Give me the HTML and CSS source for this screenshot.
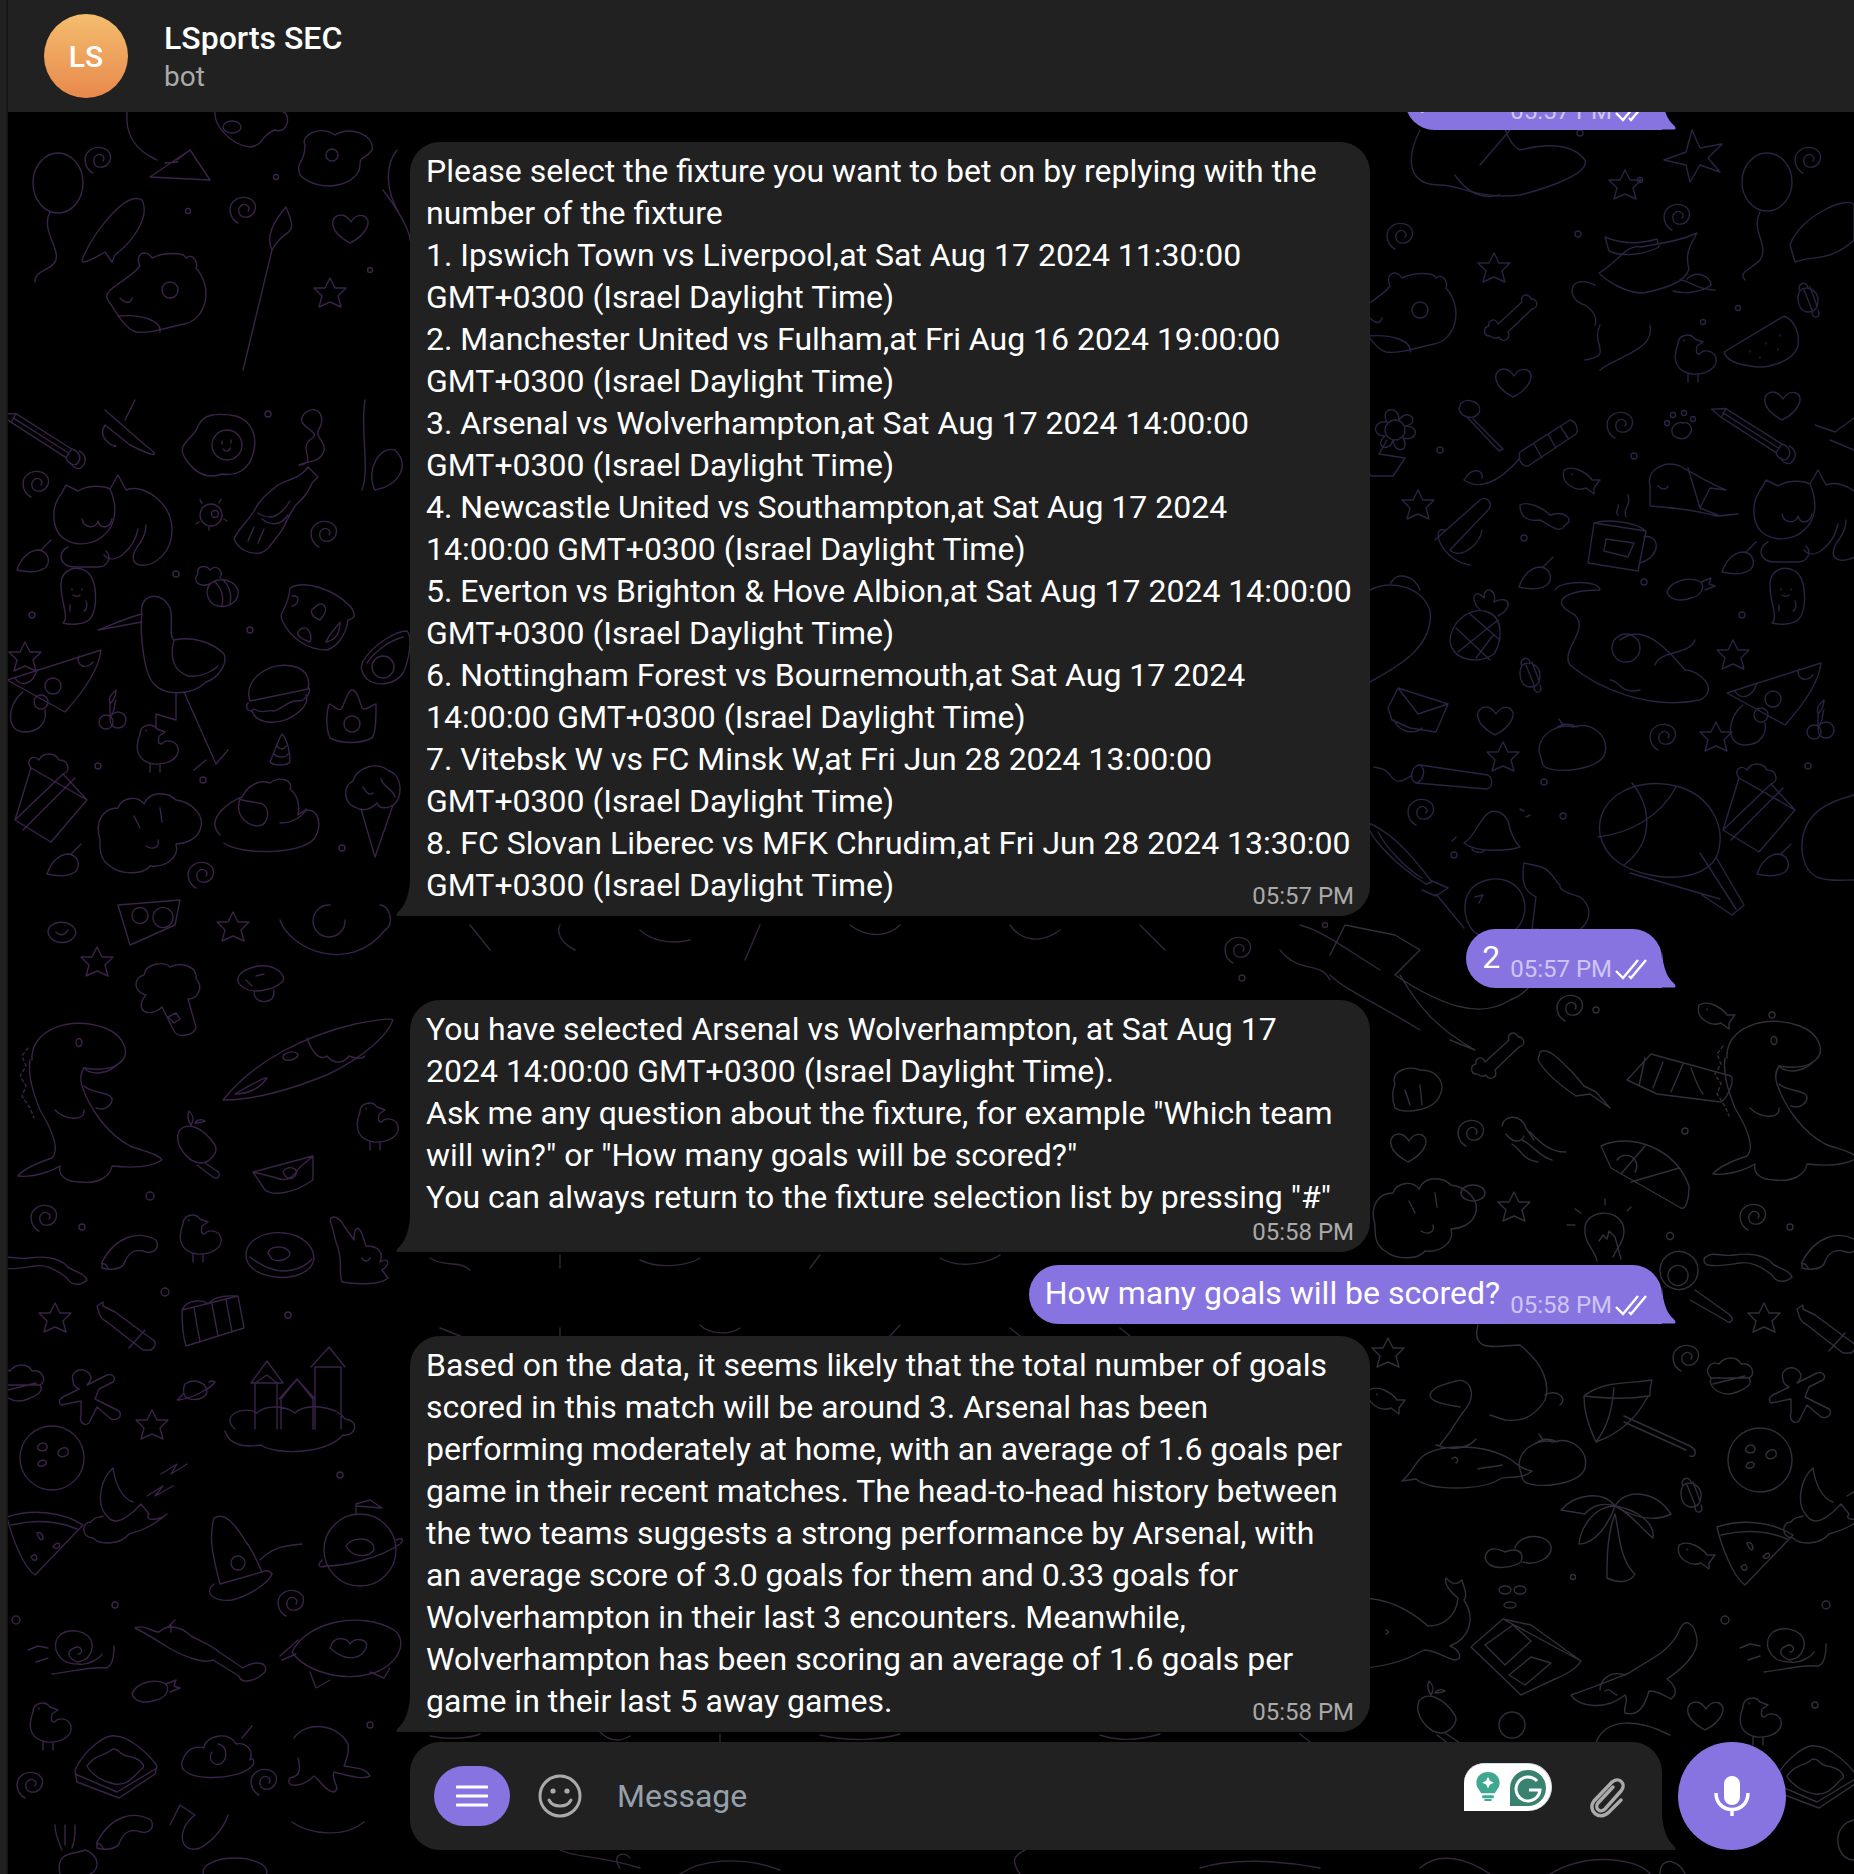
FILE: index.html
```html
<!DOCTYPE html>
<html lang="en">
<head>
  <meta charset="UTF-8">
  <title>LSports SEC</title>
  <link rel="stylesheet" href="styles.css">
</head>
<body>
  <div class="app">
    <div class="edge"></div>
    <main class="chat">
      <svg class="wallpaper" viewBox="8 0 1846 1874" aria-hidden="true">
        <defs>
          <path id="star" d="M0-15L5-5 16-5 8 3 11 14 0 9-11 14-8 3-16-5-5-5Z"/>
          <path id="heart" d="M0 15C-24 2-19-13-9-13-4-13-1-9 1-6 4-11 9-14 14-12 22-8 18 6 0 15Z"/>
          <path id="spiral" d="M3 1C6-3 1-7-3-5-8-2-7 6-1 7 7 8 12 1 10-6 7-13-4-15-11-9-18-3-15 9-7 13"/>
          <g id="leaf"><path d="M-18 12C-14 0-6-8 4-8 14-6 16 4 10 10 2 15-10 14-18 12Z"/><path d="M6-8L16-18"/></g>
          <g id="bone"><path d="M-20 14C-27 14-27 5-21 4-23-2-14-5-12 2L12-20C9-27 19-30 21-23 28-24 29-14 22-13L-2 10C2 17-8 22-11 15-13 17-17 16-20 14Z"/></g>
          <g id="candy"><path d="M-8-11C0-14 8-8 8 0 8 8 4 12-2 12-8 12-12 6-12-1-12-6-11-9-8-11ZM-10-9C-14-16-4-20-2-13M2 12C2 20 12 18 8 10M-6-10L2 10M0-13L7 6"/></g>
          <g id="duck"><path d="M-12-18C-12-27 0-30 5-23L13-20 7-16C6-10 6-8 10-8 13-13 24-12 26-4 28 6 16 13 2 12-12 10-19 0-12-18ZM-2 12V20M8 12V20M-6-22V-21"/></g>
          <g id="pencil"><path d="M-48-3L-35-9 30 3 28 13-36 1ZM-35-9L-36 1M-36-4L29 8M30 3C38 2 44 8 40 16 36 18 30 17 28 13M38 2C46 3 50 10 45 18 41 20 36 19 34 16" transform="rotate(22)"/></g>
          <g id="cat"><path d="M-55 0C-60-22-48-30-44-40L-32-34C-22-40-8-40 0-36L8-50 16-35C34-42 62-22 62 5 62 28 44 42 30 40 20 38 22 28 30 18 34 12 36 6 36 0M-55 0C-50 22-20 24-6 10 6 0 8-18 0-36"/><path d="M-42 22C-54 28-50 42-35 42H-12C-2 42 2 32-4 26M-28-6C-26 4-14 4-12-4-10 4 0 4 2-6M-6 30C4 42 24 24 28 4"/></g>
          <g id="egg"><path d="M-35 8C-45-6-25-12-22-24-16-38 0-36 10-35 26-34 38-20 34 0 30 22 14 26 2 24-14 30-26 22-35 8Z"/><circle cx="7" cy="-5" r="15"/><path d="M2-9V-6M11-10V-7M3-1C6 2 9 2 10-2"/></g>
          <g id="bottle"><path d="M30-48L40-38 34-32C30-22 26-18 18-10 10 0 8 10 2 18-6 28-10 36-18 38-28 40-40 34-44 24-40 14-30 6-24-4-18-16-10-22 0-30 10-36 22-36 30-48ZM-16 4C-8 10 2 12 10 0M-20-2C-8 6 2 2 12-14M-30 26L-24 12M-20 28L-14 14"/></g>
          <g id="steam"><path d="M-6 30C14 28-8 14 6 4 20-4-14-8 0-22 12-32 22-18 14-6 8 2 24 8 18 18 14 28 2 26-6 30Z"/></g>
          <g id="virus"><circle r="11"/><circle cx="4" cy="-1" r="3.5"/><path d="M-9-12L-11-15M8-12L10-16M13 4L16 6M-12 7L-15 9M-2 12V15"/></g>
          <g id="ghost"><path d="M-15 28C-8 22-18 6-17-12-16-26-2-30 8-24 20-16 20 14 12 24 6 30-8 30-15 28ZM-6-6V-5M4-6V-5M-5 0C-2 2 0 2 2 0M-8 10V16M8 6C10 10 8 16 6 16"/></g>
          <g id="bee"><path d="M-8-4C2-12 16-8 20 2 22 14 10 20 0 18-10 16-14 4-8-4ZM-4-7C4 0 6 8 4 18M4-9C12-2 14 6 12 16"/><path d="M-8-4C-20 0-26-8-20-14-22-22-12-24-8-18-2-24 6-18 2-10"/></g>
          <g id="pillow"><path d="M-28-30C-14-38 14-30 32-12 38-4 38 0 30 2 28 18 18 30 8 32-10 32-28 20-36 2-40-6-30-8-28-30Z"/><path d="M-4-10C4-20 14-10 2 2-8-2-8-8-4-10ZM-20 14C-14 4-4 14-8 24-14 22-22 18-20 14ZM8 24C12 14 20 8 22 4 22 14 18 22 8 24ZM-26-22C-18-24-18-14-26-12"/></g>
          <g id="stork"><path d="M-60 0C-40-8-26-14-16-16-20-34 2-42 12-22 16-8 10 6 16 10 34 6 54 12 66 24 70 34 60 48 48 52 34 66 6 66-4 54-16 42-18-6-16-16M-60 0L-16-8M16 10C12 26 14 40 30 46 48 48 60 36 60 36M26 62L58 134M18 64V90L-2 84M-2 84V98M48 130L36 140M58 134L70 120"/></g>
          <g id="avocado"><path d="M-22 6C-12-10 10-24 22-24 28-18 24 6 18 18 10 30-8 32-18 24-24 18-25 12-22 6Z"/><path d="M-18 8C-10-4 4-14 18-18"/><circle cx="-2" cy="12" r="11"/></g>
          <g id="pizzam"><path d="M-58-12L36-42C34-22 18 0 0 20ZM-50-14C-44-4-32-8-28-22M14-36C10-26 22-22 28-30"/><circle cx="-12" cy="-6" r="8"/><circle cx="-24" cy="10" r="7"/><path d="M-42 0C-58 12-60 40-40 40-24 40-18 28-20 18"/></g>
          <g id="cherry"><circle cx="-6" cy="12" r="7"/><circle cx="6" cy="10" r="8"/><path d="M-2 6V-6C-4-14 0-16 4-20 4-12 0-8-2-6M0 4C4-2 2-8 4-10"/></g>
          <g id="burger"><path d="M-28 6C-36-16-6-36 18-28 30-24 32-14 30-6ZM-30 8C-34 14-28 18-24 14-16 20-10 14-4 16 4 14 12 4 22 6 30 4 34-6 30-8M-26 16C-22 30 4 32 22 16 28 10 30 4 28 0"/></g>
          <g id="crown"><path d="M-22 26C-28 12-24-8-22-8-16-4-12 0-10-4-8-8-4-22 0-22 6-22 8-8 10-4 14 0 20-8 24-8 24 6 24 20 20 26 8 32-10 32-22 26Z"/><circle cy="12" r="8"/></g>
          <g id="corn"><path d="M-10 14C-6 4 0-12 2-14 8-8 10 6 10 14 6 18-6 18-10 14ZM-6 6C-2 10 6 10 8 6M-3-2C0 2 4 2 6-2"/></g>
          <g id="popcorn"><path d="M-40 30L-24-22 32 10-4 52ZM-24-22C-30-30-22-36-16-30-12-38 0-38 4-30 14-30 16-18 8-16L32 10M-40 30L8-16M-32 40L20-12"/></g>
          <g id="cloud"><path d="M-50 10C-56-10-46-22-32-22-28-34-10-34-6-26 0-40 18-38 26-30 42-28 56-14 50 0 46 10 34 14 26 14 30 28 14 38 0 36-6 44-28 46-40 36-50 30-50 20-50 10ZM-16-14L-10-2M10-22L12-8M-4 16C2 20 10 18 8 10"/></g>
          <g id="turkey"><path d="M-50 20C-66 4-40-14-28-18-22-30-10-36 0-32 10-40 24-34 20-26 28-20 30-8 28 0 44-14 56 6 44 24 30 40-30 40-46 28M-30-16C-36 2-20 14-8 10 0 6 0-12-12-12-20-14-28-14-30-16M10 8C24 8 34 0 36-6"/></g>
          <g id="cone"><path d="M-20 12C-32 8-32-10-22-14-18-28 2-34 14-24 28-20 28 4 18 10 12 14 4 14 2 8-6 16-14 16-20 12ZM-14 14L0 62 18 10M-12-8C-8 0-4 0-2-2M6-16C8-8 20-4 20 2"/></g>
          <g id="dino"><path d="M-58-40C-60-70-20-85 15-72 35-64 42-45 28-36 20-30 6-30-6-32-10-26-10-20-8-14 0 10 18 34 40 46 56 52 68 54 72 60 60 68 40 68 22 66 20 78 6 84-10 82-26 82-32 74-30 66-40 72-58 78-72 76-66 68-50 62-38 58-30 50-38 30-50 10-58-10-62-25-60-40-58-40Z"/><path d="M-35 10C-25 20-5 22-6 10M-6-14C0-8 14-8 20-4 26 0 18 12 6 8M-6-32C2-24 18-26 28-36M-14-58A3 4 0 1 1-14-57"/><path d="M-62-52L-68-44-64-34-70-24-64-14-68-4-60 8-56 18" stroke-dasharray="3 3"/></g>
          <g id="broccoli"><path d="M-24-10C-38-14-36-28-26-30-24-42-6-44 0-38 12-44 28-38 26-26 34-18 28-6 18-6L26 22C26 30 8 34 4 26L-8 2C-14 8-24 10-28 4-30 0-28-6-24-10ZM-2 12L6 8 10 14 4 18Z"/></g>
          <g id="mushroom"><path d="M-18-2C-30-10-24-20-4-24 14-26 26-14 20-8 12 0-8 4-18-2ZM-8 2C-8 10 0 14 8 10 12 8 12 4 12 0M-6-14L2-16M-16-10L-10-4"/></g>
          <g id="board"><path d="M-82 40C-50 0 0-24 50-36 70-40 86-42 88-40 82-24 60-4 24 14-10 28-50 40-82 40ZM-70 34C-50 22-40 18-38 18-46 30-60 34-70 34ZM-20-6C-10-12 0-4-14 0-22 2-24-4-20-6Z"/><path d="M2-22C6-10 14 2 22-4 30 6 40 2 44-4 50-2 56 0 60-4"/></g>
          <g id="popsicle"><path d="M-16-14C-8-24 8-18 20 0 24 8 14 18 6 18-6 18-22 0-16-14ZM10 18L22 26C26 28 24 36 18 32L2 20M-4-20C-8-26-8-30-6-34-2-30 0-26-4-20ZM0-22C2-26 8-26 10-24 6-22 2-22 0-22"/></g>
          <g id="envh"><path d="M-30 2L30-14V10C10 24-10 26-18 20ZM-30 2L-6 8C2 12 10 8 16-2L30-14M0 2C4-6 18-2 12 6 8 10 4 10 0 2Z"/></g>
          <g id="shrimp"><path d="M-28 12C-14-14 8-20 26-10 30-2 24 4 16 2 6-2-2 2-6 14-10 20-22 20-28 18ZM-22 18C-26 10-30 16-28 12"/></g>
          <g id="curve"><path d="M-44-8C-38-14-28-8-16-10-2-12 14-12 24 0 32 4 40 6 42 12 36 18 26 18 22 10 12 2 0-4-10-2-24 0-34 2-42 0-48-2-46-8-44-8Z"/></g>
          <g id="donut"><path d="M-34 0C-34-16-14-24 4-22 24-20 34-8 34 4 32 18 12 24-4 22-22 20-34 12-34 0ZM-12-2C-10-10 6-10 10-2 10 4-2 8-8 4ZM-30 2C-22 8-16 12-8 14 2 18 22 16 32 4"/></g>
          <g id="bunny"><path d="M-28-26C-34-38-22-38-16-26L-6-12C-6-24-2-28 2-18L6-6C18-6 24 0 20 10 30 4 30 14 22 18L28 26C20 34-8 32-18 30-22 20-16 8-24-10ZM2 6C4 10 8 10 10 6"/></g>
          <g id="gift"><path d="M-30-12L26-26 32 6-26 24C-30 12-30 0-30-12ZM-18-14L-12 20M0-18L6 14M14-22L20 10M-30-12C-24-24-8-22-4-18 4-28 20-26 24-26"/></g>
          <g id="marker"><path d="M-28-26L-22-30-22-26-10-20 28 8C32 10 30 16 26 18L18 18-18-10C-26-14-26-20-28-26ZM4 16L20-2"/></g>
          <g id="castle"><path d="M-30 44V-2L-18-10-8-2V44M-34-2L-18-24-2-2ZM-4 44V14L12-6 28 14V44M-6 14L12-6 30 14M30 44V-18H56V44M26-18L44-38 60-18M-50 44C-66 30-40 20-28 28-20 20 0 20 10 28 20 18 50 20 60 34 76 36 70 52 58 50 40 70-10 70-24 60-36 62-56 62-60 46-52 44-50 44ZM4 44C4 30 24 30 24 44"/></g>
          <g id="cupcake"><path d="M-26 0C-34-8-26-18-18-14-12-22 0-22 4-14 14-16 20-4 12 0ZM-26 0C-30 10-14 20 0 14 10 10 16 6 12 0M-24 6L8-2"/></g>
          <g id="ginger"><path d="M-20-16C-24-28-6-32-2-20-2-16-4-14-6-12L14-22C22-24 24-16 18-14L6-8 2 2 26 14C30 20 24 24 18 22L4 10-4 26C-10 30-14 24-12 18L-12 4-32 8C-36 4-32 0-26-2L-14-8C-18-10-20-12-20-16Z"/></g>
          <g id="saturn"><path d="M-12-8C-4-14 10-10 10 0 8 8-6 10-12 4-14 0-14-4-12-8ZM-14 2C-18 8-22 8-18 8-4 6 14-4 18-10 14-12 12-10 12-10"/></g>
          <g id="ball"><circle r="32"/><path d="M-14-12C-10-18-2-14-6-8-10-6-16-8-14-12ZM-14 6C-12 0-4 2-6 6-10 10-14 8-14 6ZM6-6C10-12 18-12 16-4 12 0 6 0 6-6Z"/></g>
          <g id="moon"><path d="M-12-42C-24-32-30-6-18 6-12 14-4 12 8 2L16-6 24 4C18 12 36 10 42 4 30 14 20 20 4 24-4 34-24 36-32 28-44 28-44 12-34 12-30 6-26 8-22 6M-12-42C-10-28-4-12 8-8"/><path d="M22-14L38-24 30-14 48-24M36-36L52-46 46-36 62-46"/></g>
          <g id="pizza"><path d="M-38-28C-14-36 16-34 38-20L-10 30C-22 22-34-10-38-28ZM-34-20C-10-26 14-24 32-16M-8-12C-6-6-4-4-2-6-2-10-4-14-8-12ZM8 2C12-4 16-2 14 2 12 4 10 4 8 2ZM-14 12C-10 8-8 10-8 14-10 16-12 16-14 12Z"/></g>
          <g id="rocket"><path d="M-24-32C-14-38-4-28 8-8 16 2 20 14 24 22L-18 34C-24 10-30-10-24-32ZM-24 34C-36 44-22 52-6 50 10 46 30 34 34 24 30 18 24 22 24 22M0 6A7 7 0 1 1 0 20 7 7 0 1 1 0 6ZM22 10C36-4 48-4 64-6"/></g>
          <g id="planet"><circle r="36"/><path d="M-38 10C-44 16-40 18-34 16-14 16 20 8 40-6 46-12 40-12 36-10M-14-4C-8-14 14-14 14 0 8 8-8 8-14-4ZM-4-36V-46L10-50 22-42-4-44"/></g>
          <g id="snail"><path d="M-22-2C-26-22-2-26 10-16 18-8 14 8 0 10-8 8-14 0-4-4 4-8 6 2 0 2M-26 22C-8 20 14 14 28 16 36 14 36 0 36-6M-22-2C-18 8-12 12 0 12 10 14 22 6 24 2M-50-2L-40-6-30-4M-42 10L-30 6"/></g>
          <g id="icecup"><path d="M-60-22C-50-26-44-18-36-18-28-26-14-24-4-14 8-8 18-4 24 2L48 18C60 10 74 12 70 22 60 32 46 34 44 26L18 10C8 14-12 6-26-2-36-8-44-14-60-22ZM-24-18V-26M-26-24L-20-30"/></g>
          <g id="turtle"><path d="M-48 2C-34-28 20-40 54-20 70-8 56 18 30 24 0 32-36 20-48 2ZM-60 6L-42-10M-58 10L-44 4M-10-2C-6-16 8-12 10-6 16-14 30-10 26-2 22 8 8 14-10-2ZM-30 22L-24 38-10 30M30 22L44 28 50 18"/></g>
          <g id="berry"><path d="M-18 2C-14-10 6-14 16-8 20-2 16 6 6 8-4 12-16 10-18 2ZM16-8L26-12 24-6 30-4 20 0"/></g>
          <g id="toast"><path d="M-40 10C-30-12-8-26 0-24 14-24 34-6 42 6L40 14 4 38-38 22ZM-28 6C-20-6-10-4-4-10 2-14 6-4 12-4 24-2 30 4 28 8 20 14 14 26 0 24-12 22-24 14-28 6ZM-40 14L2 32 42 8"/></g>
          <g id="sundae"><path d="M-36 10C-30-10-14-4-14-4-14-16 12-22 18-8 28-10 36-2 32 8M-36 10C-42 30 20 30 34 14 38 10 34 4 32 8M-6 0C-10 6-6 14 2 12 10 8 10-6 0-8M24-14L34-26"/></g>
          <g id="octopus"><path d="M-26-24C-14-42 18-38 28-18 30-10 26-2 24 4 36 6 46 6 50 14 42 18 30 14 14 10 10 18 22 26 14 30 6 30 0 18-6 14-18 26-36 26-30 16-18 14-20 4-22-4-30-14-26-24ZM-26-12C-18-18-12-2-6-10-2-18 12-14 18-22M0 4C4 8 8 6 10 2"/></g>
          <g id="bear"><path d="M-62 10C-70 0-40-10-30-24-36-36-24-42-18-32-6-38 14-38 16-32 24-38 28-26 26-22 44-2 36 30 14 34-4 38-22 44-34 42-46 38-54 22-62 10ZM0-8A8 8 0 1 1 0 8 8 8 0 1 1 0-8ZM-52 26C-30 24-8 30-10 42M-50 8C-44 14-40 14-38 8"/></g>
          <g id="ship"><path d="M-46 8C-28-2-18-22-4-18 14-22 30-22 52-32 44-18 40-10 44 4 40 18 18 24-2 28-18 28-36 18-46 8ZM-40-28C-26-22-8-20 12-26L14-18C0-10-24-8-36-14ZM42 14C52 4 66 12 66 20 58 26 42 30 28 26"/></g>
          <g id="melon"><path d="M-36 12L24-24C34-20 40-8 38 6 34 20 10 30-10 26-24 24-34 20-36 12ZM-10 12V11M6 4V3M20-4V-5M0 18V17M18 10V9"/></g>
          <g id="lolly"><path d="M-14-12C-6-18 8-12 4-2-2 6-14 2-16-6ZM-2 4L28 34 24 36-8 2"/></g>
          <g id="cracker"><path d="M-28 12L22-20C30-18 30-8 28-6L-20 26C-28 26-30 18-28 12ZM-14 4L-6 18M0-6L8 8M12-14L20-2M-28 18C-50 44-70 50-84 40-76 26-64 30-66 38"/></g>
          <g id="flower"><circle r="10"/><path d="M-8-8C-16-22 4-26 4-10 14-24 26-6 10-4 26-4 22 12 8 8 16 20 0 26-2 10-6 24-22 16-10 6-24 6-22-10-8-8ZM-8 10L-16 24 10 28-2 46H-24L-34 30"/></g>
          <g id="paw"><path d="M-8 10C-12 2-4-4 2-2 8-4 14 4 8 10 4 16-4 14-8 10Z"/><circle cx="-14" cy="-2" r="2.5"/><circle cx="-8" cy="-10" r="2.5"/><circle cx="3" cy="-12" r="2.5"/><circle cx="12" cy="-6" r="2.5"/></g>
          <g id="fish"><path d="M-16-10C-6-16 8-6 12 0L20 0 14 8 14 14 6 8C-4 12-20 4-16-10ZM-8-6V-5"/></g>
          <g id="mug"><path d="M-26-22L26-14 18 26-32 18ZM-26-22C-14-26 14-24 26-14M24-8C38-12 44 10 20 18M-14-6L14-2 8 12-16 6ZM-2-30C-6-34 0-36-2-40M6-28C2-38 12-38 8-50"/></g>
          <g id="whale"><path d="M-40-4C-44-20-26-30-10-24 8-14 24-4 36 0L20-2 10 18 30 26 48 24 26 26C6 20-14 18-40 16-40 10-40 2-40-4ZM-32-4C-28 0-24 0-22-4M-2-22L10 18"/></g>
          <g id="pineapple"><path d="M-30 14C-30-6-10-22 8-16 24-10 22 14 14 26 0 36-26 34-30 14ZM-24 0L10 32M-10-14L20 12M-22 24L18-8M-4 30L14 6M0-18C-12-30-4-40 4-30 4-44 18-38 14-26 30-34 34-20 18-12"/></g>
          <g id="env"><path d="M-32-2L-22-22 28-6 16 22-10 18-28 10ZM-22-22L-2 4 28-6M-26 10C-20 24-4 24 2 18"/></g>
          <g id="apple"><path d="M-34 6C-34-14-10-22 0-18 18-24 36-10 32 8 28 26-24 30-30 20ZM-10-20L-14-26M-18-16C-12-22-2-22 4-18"/></g>
          <g id="dyn"><path d="M-20-10L48 0C54 4 52 14 46 14L-24 8C-32 4-28-10-20-10ZM-28 0C-36 6-44 10-50 0-56-8-60-6-66-8M-20-10C-14-6-16 6-24 8"/></g>
          <g id="bell"><path d="M-26 18C-16 12-12-2-4-10 4-18 14-12 18-4 20 6 24 16 30 22 18 26-14 28-26 18ZM-18 24C-16 28-8 28-6 26M36-8L40-10M30-16L34-14M-34 12L-38 16"/></g>
          <g id="balloon"><path d="M-60-10C-66-50-20-70 20-58 50-48 66-20 58 8 50 30 20 36-10 30-36 24-54 14-60-10ZM-28-62C-10-40-4-4-36 20M-62-8C-30-12 0-28 16-58M-30 28L60 54M56 12L84 60 72 70 42 50M40 8L76 64"/></g>
          <g id="umbc"><path d="M-42-44C-20-36 0-16 24 16L18 18C-10 0-36-24-42-44ZM-30-34C-22-18 0 4 14 12M22 14L40 22 28 30 14 24M28 28L56 62"/></g>
          <g id="tree"><path d="M-26-32L-8-28C4-22 6-12 10-10 8-4 24 0 30 2 46 14 38 32 24 38L-18 34-14 2C-22-2-30-8-26-32ZM-12 34V50"/></g>
          <g id="round"><path d="M-20-18C0-34 32-26 32 4 30 28 4 40-14 30-28 24-34-4-20-18ZM-18-8L-10-10-14-2"/></g>
          <g id="choc"><path d="M-48 2L-24-24 56-2C60 4 52 20 46 24L-18 16ZM-30-20L-36 8M-12-16L-22 10M8-14L-4 14M16-10C20 0 22 8 28 16"/></g>
          <g id="squid"><path d="M-30-28C-22-34-8-18 4-6L14 6 26 12 40 28 20 14 6 16C-6 8-24-6-32-20Z"/></g>
          <g id="jelly"><path d="M-28-14C-26-26-8-26-4-12 0-6 4 0 4 0M-24-6C-18 2-10 4-6-4M-18 4C-8 10-8 20 8 22M-8 0C2 4 8 16 22 20M0-8C8 0 18 12 36 12"/></g>
          <g id="pizzar"><path d="M-44-26C-14-40 30-24 44 14 44 30 40 38 36 36L-34-4ZM-24 2L0-26M-14 10L34-4M-28-12A10 10 0 1 1-10 0"/></g>
          <g id="bulb"><path d="M-8 26C-10 14-22 8-20-8-18-24 10-28 18-10 22 4 12 12 8 22M-6 6L-2 0 2 4 4-4 10 2 16 24M-30-10H-38M-24-22L-30-26M0-30V-36M22-24L26-28"/></g>
          <g id="umbrella"><path d="M-56-14C-36-30-10-26 12-30 8-18 12-12 8-14-4 10-22 24-44 32-54 10-56-2-56-14ZM-56-14C-36-12-14-10 8-14M-26-22C-28 0-32 16-44 32M-16 6L50 36C58 40 56 48 50 46M-16 12L46 40"/></g>
          <g id="swan"><path d="M-58 66C-50 60-46 50-40 44-30 30 20 26 50 44 58 50 62 54 72 56 60 66 44 60 40 64 20 76-30 76-44 64ZM-20 30C-4 10 0 0 4-4 18-20 10-38-4-34-18-30-28-28-30-20-30-12-10-10 0-8M-24 30C-10 36 8 34 16 24M-8 44A3 3 0 1 1-4 48M18 54C24 52 36 52 42 50"/></g>
          <g id="palm"><path d="M0-14C-12-30-40-26-54-10L-30-6C-24-14-12-18 0-14ZM0-14C10-32 40-30 56-6 40 2 20-2 0-14ZM0-14C-20-14-34 6-36 24-20 24-6 4 0-14ZM0-14C14-8 24 6 38 18 40 4 24-10 0-14ZM0-6C-8 14-8 40-8 58 4 64 16 62 20 54 4 40 4 10 0-6Z"/></g>
          <g id="bun"><path d="M-30 6C-28-6-18-4-10 0 0-4 10-2 6 10-4 16-26 20-30 6ZM0-4C4-18 30-20 36-6 38 6 20 14 8 10"/></g>
          <g id="whale2"><path d="M-80-20C-40-28-10-10 8 6 22 6 36-2 38-22 30-28 24-36 26-42 32-36 36-34 42-40 44-32 48-24 44-20 56-2 50 18 30 26 40 30 44 40 34 40 22 36 14 30 4 30-20 44-50 50-80 48M-34 10A2 2 0 1 1-34 14"/></g>
          <g id="box"><path d="M-54-8L-22-36 56 6C52 14 36 22 30 24L-4 40ZM-40-10L-12-30 6-14-20 10ZM-16 20L6 2 26 8 0 30ZM-22-36L6-30 56 6"/></g>
          <g id="gator"><path d="M-64 30C-40 22-26 16-6 8 14-6 34-12 44-34 50-50 60-40 62-26 64-10 44 6 32 14 40 20 44 28 36 34 28 30 24 26 14 26 10 40 4 52-10 48-12 42-6 36-10 30-30 46-56 42-64 30ZM-30 26C-24 22-22 30-18 30"/></g>
          <g id="face"><path d="M-14 0C-14-12 10-14 14 0 12 14-12 14-14 0ZM-6 0C-2 4 2 4 6-2"/></g>
        </defs>

        <!-- left column -->
        <g class="doodles doodles-left">
          <ellipse cx="58" cy="183" rx="25" ry="30"/><path d="M50 212C40 230 62 250 55 262 48 272 35 270 35 282"/>
          <path d="M127 112C125 135 135 150 157 160M150 177L190 150 210 180ZM165 163L178 162M190 150L177 160"/>
          <path d="M215 112C214 125 230 145 250 147 265 145 260 135 275 130 290 135 290 112 283 112"/>
          <ellipse cx="232" cy="127" rx="9" ry="6"/><path d="M305 145C300 135 320 125 335 135 350 125 375 135 372 150 365 160 360 155 360 165 360 185 320 195 300 175 295 160 305 165 305 145Z"/><circle cx="332" cy="155" r="6"/>
          <use href="#heart" x="350" y="228"/><use href="#star" x="330" y="293"/><use href="#spiral" x="100" y="160"/><use href="#spiral" x="245" y="210"/>
          <circle cx="276" cy="177" r="2.5"/><circle cx="188" cy="211" r="2.5"/><circle cx="370" cy="270" r="2.5"/>
          <path d="M82 260C92 235 125 190 142 200 150 215 135 240 115 255L112 262 105 252C95 258 82 265 82 260Z"/>
          <use href="#bear" x="170" y="290"/>
          <path d="M243 370L272 250C285 225 300 240 286 207 275 220 265 235 272 250"/>
          <path d="M397 150C385 165 385 190 400 215M383 190C395 205 410 230 410 240"/>

          <use href="#pencil" x="45" y="435"/><use href="#egg" x="220" y="450"/><use href="#bottle" x="278" y="515"/><use href="#steam" x="305" y="435"/>
          <path d="M105 410L145 445C165 460 150 455 130 445L105 425C95 440 120 450 115 445M125 420L135 400"/>
          <path d="M365 400C360 430 370 470 362 490M375 490C400 485 410 465 395 450 380 445 365 470 375 490"/>
          <use href="#cat" x="110" y="525"/><use href="#virus" x="211" y="515"/><use href="#spiral" x="38" y="484"/><use href="#spiral" x="326" y="534"/>
          <use href="#leaf" x="35" y="558"/><use href="#ghost" x="78" y="595"/><use href="#bee" x="218" y="588"/><use href="#pillow" x="318" y="618"/>
          <use href="#stork" x="158" y="630"/><use href="#avocado" x="385" y="655"/><use href="#star" x="25" y="657"/><use href="#pizzam" x="65" y="692"/>
          <use href="#cherry" x="112" y="710"/><use href="#burger" x="278" y="695"/><use href="#crown" x="352" y="712"/><use href="#corn" x="280" y="748"/>
          <use href="#duck" x="152" y="752"/><use href="#popcorn" x="55" y="790"/><use href="#cloud" x="150" y="830"/><use href="#turkey" x="270" y="815"/>
          <use href="#cone" x="375" y="795"/><use href="#spiral" x="203" y="875"/><use href="#leaf" x="65" y="862"/>
          <circle cx="176" cy="574" r="3"/><circle cx="32" cy="615" r="3"/><circle cx="250" cy="630" r="3"/><circle cx="98" cy="766" r="3"/><circle cx="203" cy="780" r="3"/><circle cx="342" cy="848" r="3"/><circle cx="268" cy="414" r="3"/>

          <path d="M118 905L180 900 175 925 130 945ZM132 915A8 8 0 1 1 132 916M153 917A10 10 0 1 1 153 918"/>
          <use href="#star" x="233" y="927"/><use href="#star" x="97" y="962"/><use href="#face" x="62" y="932"/>
          <path d="M280 920C290 950 350 975 385 930 395 925 390 905 380 905M330 905A16 16 0 1 0 345 920"/>
          <use href="#broccoli" x="170" y="1005"/><use href="#mushroom" x="262" y="990"/><use href="#board" x="305" y="1060"/><use href="#dino" x="90" y="1100"/>
          <use href="#duck" x="372" y="1130"/><use href="#popsicle" x="195" y="1145"/><use href="#envh" x="283" y="1170"/><use href="#spiral" x="46" y="1218"/>
          <use href="#shrimp" x="130" y="1250"/><use href="#duck" x="195" y="1242"/><use href="#donut" x="280" y="1255"/><use href="#bunny" x="360" y="1252"/>
          <use href="#curve" x="45" y="1268"/><use href="#gift" x="212" y="1322"/><use href="#marker" x="125" y="1332"/><use href="#star" x="55" y="1318"/>
          <use href="#castle" x="285" y="1385"/><use href="#cupcake" x="28" y="1385"/><use href="#ginger" x="93" y="1397"/><use href="#saturn" x="197" y="1392"/>
          <use href="#star" x="152" y="1425"/><use href="#ball" x="52" y="1458"/><use href="#moon" x="125" y="1510"/><use href="#pizza" x="45" y="1545"/>
          <use href="#rocket" x="238" y="1550"/><use href="#planet" x="360" y="1550"/><use href="#spiral" x="293" y="1603"/><use href="#snail" x="78" y="1652"/>
          <use href="#icecup" x="195" y="1650"/><use href="#turtle" x="340" y="1650"/><use href="#berry" x="150" y="1692"/><use href="#duck" x="45" y="1730"/>
          <use href="#toast" x="115" y="1760"/><use href="#sundae" x="218" y="1752"/><use href="#octopus" x="320" y="1762"/><use href="#spiral" x="32" y="1785"/><use href="#spiral" x="266" y="1782"/>
          <use href="#shrimp" x="125" y="1830"/><path d="M170 1825L180 1805 195 1815C175 1830 180 1855 200 1848 215 1840 225 1825 228 1815M292 1822C310 1835 345 1838 364 1822"/>
          <path d="M60 1874C55 1850 75 1855 85 1850 100 1855 100 1870 90 1874M55 1825C55 1835 60 1845 62 1850M65 1825V1845M75 1825C75 1835 75 1840 72 1848"/>
          <ellipse cx="235" cy="1872" rx="32" ry="14"/>
          <circle cx="150" cy="1196" r="4"/><circle cx="82" cy="1227" r="3"/><circle cx="165" cy="1292" r="4"/><circle cx="288" cy="1315" r="3"/><circle cx="340" cy="1475" r="3"/><circle cx="115" cy="1605" r="3"/><circle cx="16" cy="1620" r="4"/><circle cx="370" cy="1725" r="3"/>
        </g>

        <!-- strips between the bubbles -->
        <g class="doodles doodles-middle">
          <path d="M470 925L490 950M560 925C555 935 565 945 575 950M640 930C650 940 670 945 690 940M760 925L745 960M850 925C870 940 890 935 900 925M1010 925C1020 940 1040 945 1060 930M1140 925L1165 950"/>
          <use href="#spiral" x="1240" y="950"/><circle cx="1325" cy="925" r="2.5"/><circle cx="1242" cy="978" r="3"/>
          <path d="M1300 925C1320 930 1340 945 1380 970M1280 950C1300 975 1320 960 1330 980M1330 975C1345 990 1380 1005 1420 1030"/>
          <path d="M430 1258C445 1268 460 1260 470 1270M560 1255V1268M640 1260C660 1270 690 1265 700 1258M820 1255L810 1268M940 1258C960 1270 990 1262 1000 1255"/>
          <path d="M440 1328L470 1340M560 1328V1336M700 1325C710 1335 730 1335 740 1328M900 1325L890 1336M1010 1328L1020 1336M1120 1328L1135 1340"/>
          <path d="M430 1736C450 1740 470 1738 480 1734M600 1732C610 1742 620 1742 630 1736M720 1734V1742M820 1735C850 1742 880 1740 900 1734M1100 1735C1120 1742 1140 1740 1160 1734M1300 1734L1310 1742"/>
          <path d="M560 1850C575 1858 600 1855 640 1868M620 1868C610 1855 625 1850 630 1858M680 1874C700 1860 740 1855 780 1870M1020 1874C1010 1860 1015 1855 1025 1850M1200 1868C1230 1858 1280 1860 1320 1868M1420 1868C1440 1850 1470 1860 1490 1874M1550 1874C1590 1850 1640 1860 1650 1874"/>
        </g>

        <!-- right column, upper part -->
        <g class="doodles doodles-right">
          <path d="M1420 130C1405 160 1408 185 1440 185 1460 185 1480 200 1520 195 1540 190 1590 175 1585 160 1570 140 1540 145 1520 150 1510 145 1500 125 1505 112"/>
          <path d="M1455 175C1465 190 1480 200 1500 195M1480 165L1510 130"/>
          <use href="#star" x="1625" y="185"/>
          <path d="M1692 130L1700 148 1722 144 1708 158 1720 172 1700 165 1690 182 1686 165 1664 160 1686 152Z"/>
          <ellipse cx="1767" cy="182" rx="25" ry="29"/><path d="M1760 212C1750 230 1770 245 1760 260 1750 270 1738 272 1745 280"/>
          <path d="M1790 245C1800 215 1850 195 1854 205V240C1830 262 1815 255 1795 262Z"/>
          <use href="#spiral" x="1402" y="236"/><use href="#spiral" x="1679" y="217"/><use href="#spiral" x="1810" y="160"/>
          <use href="#bear" x="1420" y="310"/><use href="#star" x="1494" y="268"/><use href="#bone" x="1510" y="322"/><use href="#ship" x="1645" y="265"/>
          <path d="M1595 285C1568 272 1565 300 1585 305 1600 315 1595 325 1595 325"/>
          <path d="M1600 325C1590 345 1615 355 1585 360M1650 325C1655 350 1620 355 1600 370"/>
          <path d="M1680 280C1690 280 1695 290 1715 290"/>
          <use href="#melon" x="1760" y="340"/><use href="#candy" x="1810" y="300"/><use href="#duck" x="1690" y="362"/>
          <use href="#lolly" x="1475" y="415"/><use href="#heart" x="1513" y="382"/><use href="#cracker" x="1548" y="440"/><use href="#flower" x="1395" y="430"/>
          <use href="#spiral" x="1622" y="425"/><use href="#paw" x="1681" y="425"/><use href="#pencil" x="1755" y="430"/><use href="#heart" x="1782" y="405"/>
          <path d="M1815 425L1835 432 1854 418M1830 440L1854 450"/>
          <use href="#star" x="1418" y="505"/><use href="#leaf" x="1537" y="575"/><use href="#fish" x="1580" y="480"/><use href="#mug" x="1620" y="545"/>
          <use href="#whale" x="1690" y="490"/><use href="#cat" x="1810" y="520"/><use href="#leaf" x="1740" y="560"/><use href="#berry" x="1685" y="590"/>
          <use href="#ghost" x="1787" y="595"/>
          <path d="M1435 540L1480 500A6 6 0 1 1 1488 510L1450 550C1460 560 1480 545 1482 530M1445 530C1430 525 1440 560 1470 565"/>
          <path d="M1520 505C1530 500 1545 510 1550 515 1565 510 1575 520 1565 525 1560 535 1550 525 1540 520 1525 522 1520 515 1520 505Z"/>
          <use href="#pineapple" x="1480" y="628"/>
          <path d="M1370 590C1390 580 1420 585 1430 610 1435 650 1390 670 1370 682M1390 585C1395 570 1415 575 1420 590"/>
          <path d="M1555 590C1560 580 1600 580 1600 590 1570 590 1545 600 1575 615 1590 630 1560 650 1570 665 1600 690 1650 710 1700 700 1720 690 1700 670 1685 670 1660 640 1640 625 1620 640"/>
          <circle cx="1626" cy="648" r="14"/><path d="M1655 665C1660 650 1690 655 1695 640M1640 690C1620 695 1620 680 1610 680"/>
          <use href="#candy" x="1532" y="675"/><use href="#env" x="1420" y="710"/><use href="#heart" x="1495" y="720"/><use href="#apple" x="1573" y="745"/>
          <use href="#star" x="1503" y="757"/><use href="#dyn" x="1440" y="775"/><use href="#star" x="1716" y="737"/><use href="#spiral" x="1665" y="737"/>
          <use href="#star" x="1733" y="655"/><use href="#pizzam" x="1785" y="705"/><use href="#cherry" x="1820" y="720"/><use href="#popcorn" x="1763" y="800"/>
          <path d="M1854 795C1835 800 1800 810 1802 850 1805 885 1830 880 1854 880"/>
          <use href="#leaf" x="1775" y="862"/><use href="#balloon" x="1660" y="845"/><use href="#bell" x="1490" y="825"/><use href="#spiral" x="1423" y="812"/>
          <use href="#umbc" x="1408" y="866"/><use href="#tree" x="1550" y="895"/><use href="#round" x="1493" y="905"/>
          <circle cx="1640" cy="180" r="2.5"/><circle cx="1580" cy="133" r="3"/><circle cx="1578" cy="234" r="3"/><circle cx="1703" cy="322" r="2.5"/><circle cx="1738" cy="308" r="2.5"/><circle cx="1440" cy="450" r="3"/><circle cx="1634" cy="456" r="3"/><circle cx="1524" cy="538" r="3"/><circle cx="1644" cy="582" r="3"/><circle cx="1742" cy="615" r="3"/><circle cx="1544" cy="782" r="3"/><circle cx="1563" cy="816" r="3"/><circle cx="1454" cy="855" r="3"/><circle cx="1808" cy="766" r="3"/>
        </g>

        <!-- right column, lower part -->
        <g class="doodles doodles-bottom">
          <path d="M1330 955L1345 925 1395 935 1420 950 1395 975C1440 1005 1480 1020 1510 1000 1535 990 1535 975 1537 960M1400 975C1420 1010 1440 1030 1475 1050L1450 1040"/>
          <use href="#spiral" x="1572" y="1008"/><use href="#fish" x="1715" y="1015"/><use href="#dino" x="1785" y="1098"/><use href="#bone" x="1497" y="1060"/>
          <use href="#squid" x="1570" y="1080"/><use href="#choc" x="1675" y="1078"/><use href="#spiral" x="1473" y="1133"/>
          <path d="M1395 1085C1390 1070 1410 1065 1420 1070 1440 1070 1445 1085 1440 1095 1435 1110 1405 1115 1395 1108 1392 1100 1392 1090 1395 1085ZM1405 1090L1410 1105M1420 1085L1422 1105"/>
          <use href="#jelly" x="1530" y="1140"/><use href="#heart" x="1408" y="1147"/><use href="#pizzar" x="1645" y="1172"/><use href="#cloud" x="1425" y="1215"/>
          <ellipse cx="1473" cy="1193" rx="12" ry="8"/><use href="#star" x="1514" y="1207"/><use href="#bulb" x="1605" y="1235"/><use href="#spiral" x="1755" y="1217"/>
          <use href="#shrimp" x="1830" y="1250"/><use href="#curve" x="1750" y="1265"/><use href="#star" x="1764" y="1318"/><use href="#marker" x="1825" y="1335"/>
          <path d="M1660 1270A19 19 0 1 1 1660 1271M1695 1290L1730 1315C1735 1320 1730 1325 1725 1320L1690 1300"/><path d="M1668 1275A10 10 0 1 1 1668 1276"/>
          <use href="#spiral" x="1688" y="1358"/><use href="#star" x="1388" y="1353"/><use href="#cupcake" x="1737" y="1378"/><use href="#ginger" x="1803" y="1395"/>
          <use href="#fish" x="1385" y="1400"/><use href="#swan" x="1460" y="1415"/><use href="#umbrella" x="1640" y="1410"/><use href="#apple" x="1553" y="1460"/>
          <path d="M1478 1325C1470 1355 1500 1345 1520 1345 1545 1365 1550 1385 1545 1400 1530 1425 1510 1420 1505 1420M1545 1395A10 7 0 1 1 1560 1405M1505 1420L1490 1415"/>
          <use href="#ball" x="1760" y="1460"/><use href="#candy" x="1693" y="1495"/><use href="#moon" x="1825" y="1510"/><use href="#palm" x="1615" y="1520"/>
          <use href="#pizza" x="1755" y="1555"/><use href="#fish" x="1695" y="1555"/><use href="#bun" x="1515" y="1552"/><use href="#whale2" x="1420" y="1620"/>
          <use href="#box" x="1525" y="1655"/><use href="#gator" x="1635" y="1665"/><use href="#snail" x="1790" y="1650"/><use href="#popsicle" x="1435" y="1715"/>
          <circle cx="1512" cy="1725" r="13"/><use href="#heart" x="1705" y="1715"/><use href="#duck" x="1755" y="1725"/><use href="#toast" x="1815" y="1770"/>
          <path d="M1600 1690C1600 1680 1610 1670 1625 1675M1595 1745C1605 1715 1640 1720 1670 1735"/>
          <ellipse cx="1505" cy="1590" rx="6" ry="4"/><ellipse cx="1520" cy="1590" rx="6" ry="4"/><ellipse cx="1510" cy="1605" rx="6" ry="3"/>
          <path d="M1854 1820C1830 1825 1835 1860 1854 1860M1660 1874C1660 1855 1680 1860 1685 1874"/>
          <circle cx="1772" cy="1015" r="3"/><circle cx="1596" cy="1010" r="3"/><circle cx="1685" cy="1131" r="3"/><circle cx="1790" cy="1227" r="3"/><circle cx="1670" cy="1236" r="3.5"/><circle cx="1826" cy="1605" r="4"/><circle cx="1725" cy="1620" r="4"/><circle cx="1815" cy="1705" r="3"/><circle cx="1573" cy="1577" r="2.5"/>
        </g>
      </svg>

      <header class="chat-header">
        <div class="avatar">LS</div>
        <div class="peer">
          <div class="peer-name">LSports SEC</div>
          <div class="peer-status">bot</div>
        </div>
      </header>

      <section class="messages">
        <div class="bubble bubble-out">
          <span class="bubble-text">/start</span>
          <span class="out-meta">
            <span class="time">05:57 PM</span>
            <svg class="checks" viewBox="0 0 34 22"><path d="M2 13L9 20 24 2M15 18L17 20 32 2"/></svg>
          </span>
        </div>

        <div class="bubble bubble-in">
          Please select the fixture you want to bet on by replying with the number of the fixture<br>
          1. Ipswich Town vs Liverpool,at Sat Aug 17 2024 11:30:00 GMT+0300 (Israel Daylight Time)<br>
          2. Manchester United vs Fulham,at Fri Aug 16 2024 19:00:00 GMT+0300 (Israel Daylight Time)<br>
          3. Arsenal vs Wolverhampton,at Sat Aug 17 2024 14:00:00 GMT+0300 (Israel Daylight Time)<br>
          4. Newcastle United vs Southampton,at Sat Aug 17 2024 14:00:00 GMT+0300 (Israel Daylight Time)<br>
          5. Everton vs Brighton &amp; Hove Albion,at Sat Aug 17 2024 14:00:00 GMT+0300 (Israel Daylight Time)<br>
          6. Nottingham Forest vs Bournemouth,at Sat Aug 17 2024 14:00:00 GMT+0300 (Israel Daylight Time)<br>
          7. Vitebsk W vs FC Minsk W,at Fri Jun 28 2024 13:00:00 GMT+0300 (Israel Daylight Time)<br>
          8. FC Slovan Liberec vs MFK Chrudim,at Fri Jun 28 2024 13:30:00 GMT+0300 (Israel Daylight Time)
          <span class="time time-in">05:57 PM</span>
        </div>

        <div class="bubble bubble-out">
          <span class="bubble-text">2</span>
          <span class="out-meta">
            <span class="time">05:57 PM</span>
            <svg class="checks" viewBox="0 0 34 22"><path d="M2 13L9 20 24 2M15 18L17 20 32 2"/></svg>
          </span>
        </div>

        <div class="bubble bubble-in bubble-in-tall">
          You have selected Arsenal vs Wolverhampton, at Sat Aug 17 2024 14:00:00 GMT+0300 (Israel Daylight Time).<br>
          Ask me any question about the fixture, for example "Which team will win?" or "How many goals will be scored?"<br>
          You can always return to the fixture selection list by pressing "#"
          <span class="time time-in">05:58 PM</span>
        </div>

        <div class="bubble bubble-out">
          <span class="bubble-text">How many goals will be scored?</span>
          <span class="out-meta">
            <span class="time">05:58 PM</span>
            <svg class="checks" viewBox="0 0 34 22"><path d="M2 13L9 20 24 2M15 18L17 20 32 2"/></svg>
          </span>
        </div>

        <div class="bubble bubble-in">
          Based on the data, it seems likely that the total number of goals scored in this match will be around 3. Arsenal has been performing moderately at home, with an average of 1.6 goals per game in their recent matches. The head-to-head history between the two teams suggests a strong performance by Arsenal, with an average score of 3.0 goals for them and 0.33 goals for Wolverhampton in their last 3 encounters. Meanwhile, Wolverhampton has been scoring an average of 1.6 goals per game in their last 5 away games.
          <span class="time time-in">05:58 PM</span>
        </div>
      </section>

      <footer class="composer-row">
        <div class="composer">
          <button class="menu-btn" aria-label="Menu">
            <svg viewBox="0 0 32 24" class="menu-icon"><path d="M1 3H31M1 12H31M1 21H31"/></svg>
          </button>
          <svg class="smile" viewBox="0 0 44 44"><circle cx="22" cy="22" r="20"/><circle class="smile-eye" cx="15" cy="17" r="2.6"/><circle class="smile-eye" cx="29" cy="17" r="2.6"/><path d="M11 26C15 34 29 34 33 26"/></svg>
          <div class="placeholder">Message</div>
          <div class="grammarly">
            <svg class="grammarly-bulb" viewBox="0 0 24 32"><path d="M12 1C5 1 0 6 0 12 0 17 3 19 5 23H19C21 19 24 17 24 12 24 6 19 1 12 1Z"/><path class="bulb-spark" d="M12 6L14 10 18 12 14 14 12 18 10 14 6 12 10 10Z"/><rect x="6" y="25" width="12" height="3" rx="1"/><rect x="8" y="29" width="8" height="2" rx="1"/></svg>
            <svg class="grammarly-g" viewBox="0 0 36 36"><path d="M18 0A18 18 0 1 1 18 36H0V18A18 18 0 0 1 18 0Z"/><path class="g-mark" d="M27 11A12 12 0 1 0 30 20H19"/></svg>
          </div>
          <svg class="clip" viewBox="0 0 40 44"><path d="M25 13L10 29C6 34 12 40 17 35L33 17C39 10 31 2 24 8L6 27C-1 36 11 48 21 38L33 26"/></svg>
        </div>
        <button class="mic" aria-label="Record">
          <svg viewBox="0 0 36 42" class="mic-icon"><rect class="mic-body" x="10" y="1" width="16" height="29" rx="8"/><path d="M2 18C2 40 34 40 34 18M18 34V41"/></svg>
        </button>
      </footer>
    </main>
  </div>
</body>
</html>
```
FILE: styles.css
```css
* {
  box-sizing: border-box;
}
body {
  margin: 0;
  background: #000;
  font-family: Roboto, "Liberation Sans", sans-serif;
  color: #fff;
}
.app {
  display: flex;
  height: 1874px;
}
.edge {
  width: 8px;
  background: #212121;
  border-right: 2px solid #171717;
}
.chat {
  position: relative;
  flex: 1;
  display: flex;
  flex-direction: column;
  overflow: hidden;
  background: #000;
}
.wallpaper {
  position: absolute;
  top: 0;
  left: 0;
  width: 1846px;
  height: 1874px;
}
.doodles {
  fill: none;
  stroke-width: 1.4;
  stroke-linecap: round;
  stroke-linejoin: round;
}
.doodles-left { stroke: #3a2349; }
.doodles-middle { stroke: #33263b; }
.doodles-right { stroke: #2a2342; }
.doodles-bottom { stroke: #332e3a; }

.chat-header {
  position: relative;
  z-index: 2;
  flex: none;
  height: 112px;
  background: #212121;
  display: flex;
  align-items: center;
  gap: 36px;
  padding-left: 36px;
}
.avatar {
  width: 84px;
  height: 84px;
  border-radius: 50%;
  background: linear-gradient(#f4bd6e, #e8894c);
  display: flex;
  align-items: center;
  justify-content: center;
  font-size: 30px;
  font-weight: 500;
}
.peer-name {
  font-size: 32px;
  font-weight: 500;
  line-height: 40px;
}
.peer-status {
  margin-top: 1px;
  font-size: 28px;
  line-height: 36px;
  color: #aaa;
}

.messages {
  position: relative;
  z-index: 1;
  flex: 1;
  min-height: 0;
  display: flex;
  flex-direction: column;
  justify-content: flex-end;
  gap: 12.5px;
  padding: 0 179px 10px 402px;
  font-size: 32px;
  line-height: 42px;
}
.bubble {
  position: relative;
  flex: none;
}
.bubble::after {
  content: "";
  position: absolute;
  bottom: 0;
  width: 14px;
  height: 36px;
  background: inherit;
  clip-path: path("M0 0C1 16 5 26 12 32 14 34 14 36 12 36H0Z");
}
.bubble-in {
  align-self: flex-start;
  width: 960px;
  padding: 8px 16px 10px;
  background: #212121;
  border-radius: 30px 30px 30px 0;
}
.bubble-in::after {
  right: 100%;
  transform: scaleX(-1);
}
.bubble-in-tall {
  padding-bottom: 34px;
}
.bubble-out {
  align-self: flex-end;
  margin-right: 13px;
  height: 59px;
  display: flex;
  align-items: flex-end;
  gap: 10px;
  padding: 0 14px 5px 16px;
  background: #8774e1;
  border-radius: 30px 30px 0 30px;
}
.bubble-out::after {
  left: 100%;
}
.bubble-text {
  padding-bottom: 5px;
}
.out-meta {
  display: flex;
  align-items: center;
  gap: 2px;
}
.time {
  font-size: 24px;
  line-height: 28px;
}
.time-in {
  position: absolute;
  right: 16px;
  bottom: 6px;
  color: #aaa;
}
.out-meta .time {
  color: rgba(255, 255, 255, 0.6);
}
.checks {
  width: 34px;
  height: 22px;
  fill: none;
  stroke: #fff;
  stroke-width: 2.4;
}

.composer-row {
  position: relative;
  z-index: 1;
  flex: none;
  display: flex;
  gap: 16px;
  padding: 0 0 24px 402px;
}
.composer {
  position: relative;
  width: 1252px;
  height: 108px;
  display: flex;
  align-items: center;
  padding: 0 34px 0 24px;
  background: #212121;
  border-radius: 30px 30px 0 30px;
}
.composer::after {
  content: "";
  position: absolute;
  left: 100%;
  bottom: 0;
  width: 14px;
  height: 36px;
  background: inherit;
  clip-path: path("M0 0C1 16 5 26 12 32 14 34 14 36 12 36H0Z");
}
.menu-btn {
  width: 76px;
  height: 60px;
  border: 0;
  border-radius: 30px;
  background: #8774e1;
  display: flex;
  align-items: center;
  justify-content: center;
}
.menu-icon {
  width: 32px;
  height: 24px;
  fill: none;
  stroke: #fff;
  stroke-width: 3;
  stroke-linecap: round;
}
.smile {
  width: 44px;
  height: 44px;
  margin-left: 28px;
  fill: none;
  stroke: #aaa;
  stroke-width: 3;
  stroke-linecap: round;
}
.smile-eye {
  fill: #aaa;
  stroke: none;
}
.placeholder {
  flex: 1;
  margin-left: 35px;
  font-size: 32px;
  color: #95a0aa;
}
.grammarly {
  width: 88px;
  height: 48px;
  margin: -18px 36px 0 0;
  display: flex;
  align-items: center;
  gap: 10px;
  padding-left: 12px;
  background: #fff;
  border: 1px solid #d8dae6;
  border-left: 0;
  border-bottom: 0;
  border-radius: 20px 24px 24px 0;
}
.grammarly-bulb {
  width: 24px;
  height: 31px;
  fill: #3fa88f;
  margin-bottom: 2px;
}
.bulb-spark {
  fill: #fff;
}
.grammarly-g {
  width: 36px;
  height: 36px;
  fill: #39826f;
}
.g-mark {
  fill: none;
  stroke: #fff;
  stroke-width: 3;
}
.clip {
  width: 40px;
  height: 44px;
  flex: none;
  fill: none;
  stroke: #aaa;
  stroke-width: 3.5;
  stroke-linecap: round;
}
.mic {
  width: 108px;
  height: 108px;
  border: 0;
  border-radius: 50%;
  background: #8774e1;
  display: flex;
  align-items: center;
  justify-content: center;
}
.mic-icon {
  width: 36px;
  height: 42px;
  fill: none;
  stroke: #fff;
  stroke-width: 3.5;
}
.mic-body {
  fill: #fff;
  stroke: none;
}
```
